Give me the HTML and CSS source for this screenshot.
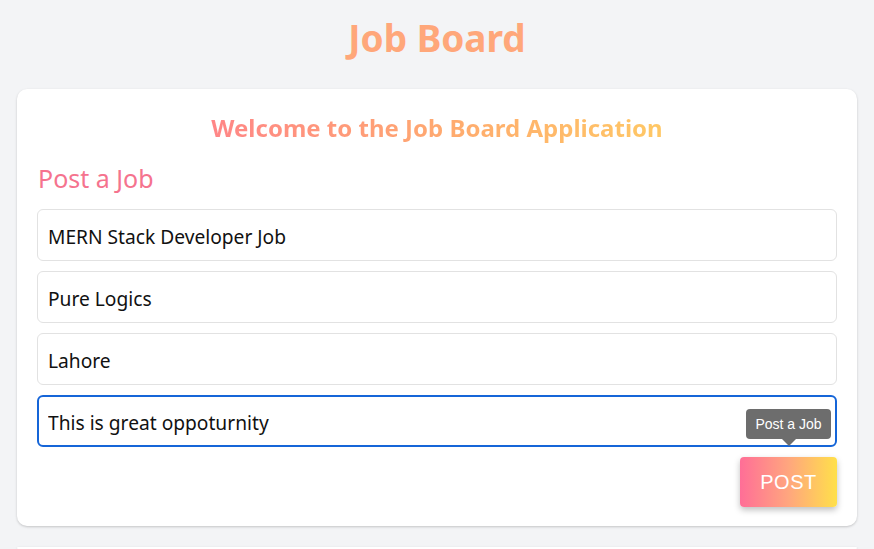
FILE: index.html
```html
<!DOCTYPE html>
<html lang="en">
<head>
<meta charset="utf-8">
<title>Job Board</title>
<link rel="stylesheet" href="styles.css">
</head>
<body>
  <h1 class="app-title">Job Board</h1>
  <main class="card">
    <h2 class="welcome"><span class="gradient-text">Welcome to the Job Board Application</span></h2>
    <h3 class="section-title">Post a Job</h3>
    <form class="job-form">
      <input class="field" type="text" value="MERN Stack Developer Job">
      <input class="field" type="text" value="Pure Logics">
      <input class="field" type="text" value="Lahore">
      <input class="field field-focus" type="text" value="This is great oppoturnity">
      <div class="actions">
        <div class="btn-wrap">
          <span class="tooltip">Post a Job</span>
          <button class="post-btn" type="button">POST</button>
        </div>
      </div>
    </form>
  </main>
  <section class="card card-next"></section>
</body>
</html>
```
FILE: styles.css
```css
* { box-sizing: border-box; }
html, body { margin: 0; padding: 0; }
body {
  background: #f3f4f6;
  font-family: "Noto Sans", "Open Sans", sans-serif;
  width: 874px;
  height: 549px;
  overflow: hidden;
}
.app-title {
  margin: 0;
  padding: 14px 0 0;
  height: 89px;
  text-align: center;
  font-size: 37px;
  line-height: 48px;
  font-weight: 700;
  color: #ffa77a;
}
.card {
  margin: 0 17px 21px;
  background: #fff;
  border-radius: 10px;
  box-shadow: 0 1px 3px rgba(0,0,0,0.12), 0 1px 2px rgba(0,0,0,0.08);
  padding: 20px 20px 19px;
}
.welcome {
  margin: 0;
  text-align: center;
  font-size: 24px;
  line-height: 38px;
  font-weight: 700;
}
.gradient-text {
  background: linear-gradient(90deg, #ff8687 0%, #ffac6e 55%, #ffc865 100%);
  -webkit-background-clip: text;
  background-clip: text;
  color: transparent;
}
.section-title {
  margin: 15px 0 0 1px;
  font-size: 25px;
  line-height: 32px;
  font-weight: 400;
  color: #f5738e;
}
.job-form {
  margin-top: 15px;
  display: flex;
  flex-direction: column;
  gap: 10px;
}
.field {
  display: block;
  width: 100%;
  height: 52px;
  border: 1px solid #e2e2e2;
  border-radius: 6px;
  padding: 2px 10px 0;
  font-family: "Noto Sans", "Open Sans", sans-serif;
  font-size: 19.2px;
  color: #111;
  background: #fff;
}
.field-focus {
  border: 2px solid #1565d8;
  padding: 2px 9px 0;
  outline: none;
}
.actions {
  display: flex;
  justify-content: flex-end;
}
.btn-wrap {
  position: relative;
}
.post-btn {
  display: block;
  width: 97px;
  height: 50px;
  border: none;
  border-radius: 4px;
  background: linear-gradient(90deg, #ff6e97 0%, #ffa67e 50%, #ffe04a 100%);
  color: #fff;
  font-family: "Liberation Sans", Arial, sans-serif;
  font-size: 20px;
  letter-spacing: 0.5px;
  box-shadow: 0 3px 6px rgba(0,0,0,0.25);
}
.tooltip {
  position: absolute;
  left: 6px;
  top: -48px;
  width: 85px;
  height: 30px;
  background: #6d6d6d;
  color: #fff;
  border-radius: 4px;
  font-family: "Liberation Sans", Arial, sans-serif;
  font-size: 14px;
  line-height: 30px;
  text-align: center;
  white-space: nowrap;
}
.tooltip::after {
  content: "";
  position: absolute;
  left: 50%;
  bottom: -7px;
  margin-left: -7px;
  border-left: 7px solid transparent;
  border-right: 7px solid transparent;
  border-top: 7px solid #6d6d6d;
}
.card-next {
  height: 2px;
  margin-bottom: 0;
  padding: 0;
}
```
